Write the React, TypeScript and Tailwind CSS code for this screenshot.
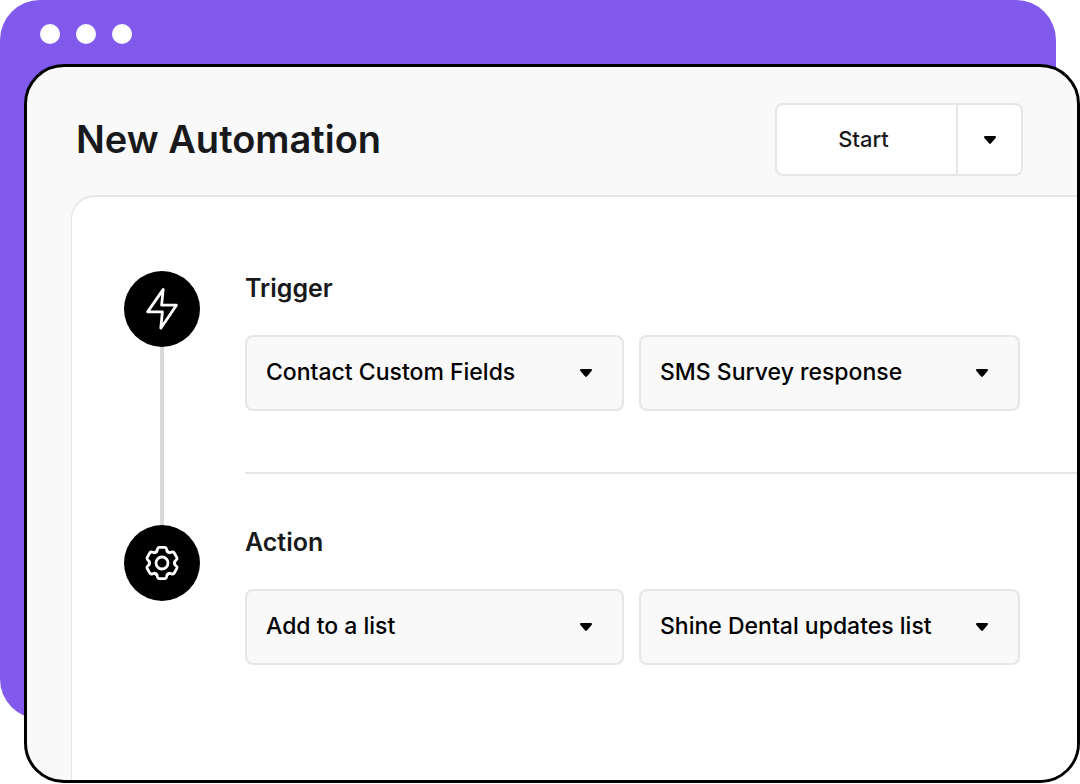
import { type ReactNode } from "react";

type Field = { label: string; value: string };

const triggerFields: Field[] = [
  { label: "Trigger source", value: "Contact Custom Fields" },
  { label: "Trigger event", value: "SMS Survey response" },
];

const actionFields: Field[] = [
  { label: "Action type", value: "Add to a list" },
  { label: "Target list", value: "Shine Dental updates list" },
];

function Caret() {
  return (
    <svg viewBox="0 0 12 8" className="h-2 w-3" aria-hidden="true">
      <path
        d="M1.2 0H10.8C11.9 0 12.3 1.2 11.6 2L7.1 7.2C6.5 7.9 5.5 7.9 4.9 7.2L0.4 2C-0.3 1.2 0.1 0 1.2 0Z"
        fill="#000"
      />
    </svg>
  );
}

function BoltIcon() {
  return (
    <svg viewBox="0 0 76 76" className="size-full" aria-hidden="true">
      <path
        d="M39.2 18.4L23.6 40.9H38.4L36.8 57.2L52.4 34.2H37.6Z"
        fill="none"
        stroke="#fff"
        strokeWidth="2.8"
        strokeLinejoin="round"
      />
    </svg>
  );
}

// One tooth, repeated every 60 degrees around the hub
const TOOTH =
  "M-6.4 -11C-5.2 -10.7 -5 -11.8 -4.6 -13.6Q-4.1 -15.6 -2.8 -15.6H2.8Q4.1 -15.6 4.6 -13.6C5 -11.8 5.2 -10.7 6.4 -11";

function GearIcon() {
  return (
    <svg viewBox="-38 -38 76 76" className="size-full" aria-hidden="true">
      <g fill="none" stroke="#fff" strokeWidth="2.8" strokeLinecap="round">
        {[0, 60, 120, 180, 240, 300].map((angle) => (
          <path key={angle} d={TOOTH} transform={`rotate(${angle})`} />
        ))}
        <circle r="6" />
      </g>
    </svg>
  );
}

function SelectField({ label, value }: Field) {
  return (
    <div className="grid items-center">
      <select
        aria-label={label}
        className="col-start-1 row-start-1 h-[76px] w-full appearance-none rounded-lg border-2 border-[#e6e6e6] bg-[#f9f9f9] pb-0.5 pl-[19px] pr-14 text-[23px] font-medium text-black"
      >
        <option>{value}</option>
      </select>
      <span className="pointer-events-none col-start-1 row-start-1 mr-8 justify-self-end">
        <Caret />
      </span>
    </div>
  );
}

type StepProps = {
  title: string;
  icon: ReactNode;
  fields: Field[];
  last?: boolean;
};

function Step({ title, icon, fields, last = false }: StepProps) {
  return (
    <section className="flex gap-[45px]">
      <div className="flex shrink-0 flex-col items-center">
        <div className="size-[76px] rounded-full bg-black">{icon}</div>
        {!last && <div className="w-1 flex-1 bg-[#d9d9d9]" />}
      </div>

      <div className="min-w-0 flex-1">
        <h2 className="mb-[30px] text-[25px] leading-[34px] font-semibold">{title}</h2>
        <div className="mr-[57px] grid grid-cols-[379fr_381fr] gap-[15px]">
          {fields.map((field) => (
            <SelectField key={field.label} {...field} />
          ))}
        </div>
        {!last && <hr className="mt-[61px] mb-[51px] border-t-2 border-[#e6e6e6]" />}
      </div>
    </section>
  );
}

export default function App() {
  return (
    <main className="grid min-h-screen bg-white pb-px font-['Inter',sans-serif] text-[#18191b]">
      {/* Back window */}
      <div className="col-start-1 row-start-1 mr-6 mb-16 rounded-[40px] bg-[#8259ed]">
        <div className="flex gap-4 px-10 py-6">
          <span className="size-5 rounded-full bg-white" />
          <span className="size-5 rounded-full bg-white" />
          <span className="size-5 rounded-full bg-white" />
        </div>
      </div>

      {/* Front window */}
      <div className="col-start-1 row-start-1 mt-16 ml-6 flex flex-col overflow-hidden rounded-[40px] border-3 border-black bg-[#f9f9f9]">
        <header className="flex h-32 items-center justify-between pt-[17px] pr-[54px] pl-[49px]">
          <h1 className="text-[38px] leading-[49px] font-semibold">New Automation</h1>
          <div className="flex h-[73px] rounded-lg border-2 border-[#e6e6e6] bg-white">
            <button type="button" className="w-[179px] pr-1.5 text-[22px] font-medium">
              Start
            </button>
            <button
              type="button"
              aria-label="More start options"
              className="flex w-[65px] items-center justify-center border-l-2 border-[#e6e6e6]"
            >
              <Caret />
            </button>
          </div>
        </header>

        <div className="ml-11 flex-1 rounded-tl-3xl border-t-2 border-l border-[#e6e6e6] bg-white pt-[74px] pl-[52px]">
          <Step title="Trigger" icon={<BoltIcon />} fields={triggerFields} />
          <Step title="Action" icon={<GearIcon />} fields={actionFields} last />
        </div>
      </div>
    </main>
  );
}
